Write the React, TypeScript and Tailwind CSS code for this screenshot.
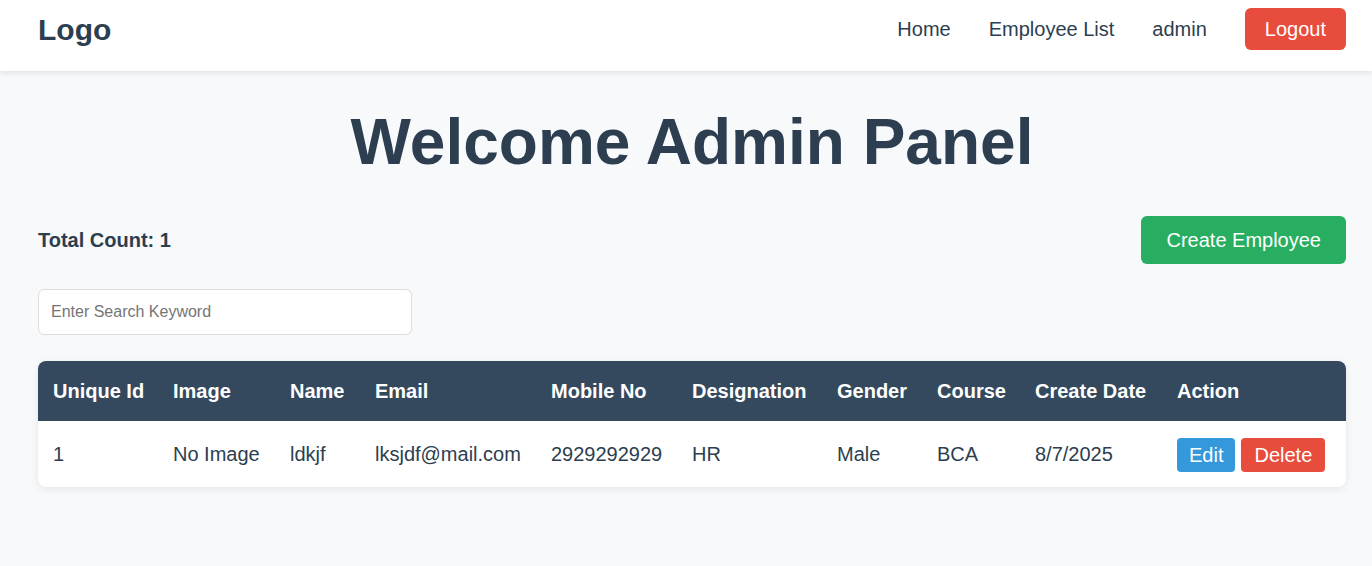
import * as React from "react";

const columns = [
  { label: "Unique Id", width: "w-[120px]" },
  { label: "Image", width: "w-[117px]" },
  { label: "Name", width: "w-[85px]" },
  { label: "Email", width: "w-[176px]" },
  { label: "Mobile No", width: "w-[141px]" },
  { label: "Designation", width: "w-[145px]" },
  { label: "Gender", width: "w-[100px]" },
  { label: "Course", width: "w-[98px]" },
  { label: "Create Date", width: "w-[142px]" },
  { label: "Action", width: "" },
];

const employees = [
  {
    id: "1",
    image: "No Image",
    name: "ldkjf",
    email: "lksjdf@mail.com",
    mobile: "2929292929",
    designation: "HR",
    gender: "Male",
    course: "BCA",
    date: "8/7/2025",
  },
];

function Navbar() {
  return (
    <div className="bg-white h-[71px] flex items-center justify-between pl-[38px] pr-[26px] pb-[13px] shadow-[0_2px_6px_rgba(0,0,0,0.1)] relative">
      <h1 className="text-[30px] font-bold text-[#2c3e50]">Logo</h1>
      <div className="flex items-center gap-[38px] text-[20px] text-[#2c3e50]">
        <a>Home</a>
        <a>Employee List</a>
        <span>admin</span>
        <button className="bg-[#e74c3c] text-white rounded-[6px] h-[42px] px-[20px]">
          Logout
        </button>
      </div>
    </div>
  );
}

export default function App() {
  return (
    <div
      className="min-h-[566px] bg-[#f8f9fa] text-[#2c3e50]"
      style={{ fontFamily: '"Liberation Sans", Arial, sans-serif' }}
    >
      <Navbar />
      <div className="pl-[38px] pr-[26px]">
        <h2 className="text-[64px] font-bold text-center leading-[74px] mt-[34px]">
          Welcome Admin Panel
        </h2>
        <div className="flex items-center justify-between mt-[37px]">
          <p className="text-[20px] font-bold">Total Count: 1</p>
          <button className="bg-[#27ae60] text-white text-[20px] h-[48px] px-[25px] rounded-[6px]">
            Create Employee
          </button>
        </div>
        <input
          className="mt-[25px] w-[374px] h-[46px] bg-white border border-[#ddd] rounded-[6px] px-[12px] text-[16px] placeholder:text-[#757575] outline-none block"
          placeholder="Enter Search Keyword"
        />
        <div className="mt-[26px] bg-white rounded-[8px] shadow-[0_2px_8px_rgba(0,0,0,0.08)] overflow-hidden">
          <table className="w-full table-fixed text-[20px] text-left">
            <thead className="bg-[#34495e] text-white">
              <tr className="h-[60px]">
                {columns.map((c) => (
                  <th key={c.label} className={`${c.width} font-bold pl-[15px]`}>
                    {c.label}
                  </th>
                ))}
              </tr>
            </thead>
            <tbody>
              {employees.map((e) => (
                <tr key={e.id} className="h-[66px]">
                  <td className="pl-[15px]">{e.id}</td>
                  <td className="pl-[15px]">{e.image}</td>
                  <td className="pl-[15px]">{e.name}</td>
                  <td className="pl-[15px]">{e.email}</td>
                  <td className="pl-[15px]">{e.mobile}</td>
                  <td className="pl-[15px]">{e.designation}</td>
                  <td className="pl-[15px]">{e.gender}</td>
                  <td className="pl-[15px]">{e.course}</td>
                  <td className="pl-[15px]">{e.date}</td>
                  <td className="pl-[15px]">
                    <div className="flex gap-[6px] pt-[1px]">
                      <button className="bg-[#3498db] text-white h-[34px] px-[12px] rounded-[4px]">
                        Edit
                      </button>
                      <button className="bg-[#e74c3c] text-white h-[34px] px-[13px] rounded-[4px]">
                        Delete
                      </button>
                    </div>
                  </td>
                </tr>
              ))}
            </tbody>
          </table>
        </div>
      </div>
    </div>
  );
}
